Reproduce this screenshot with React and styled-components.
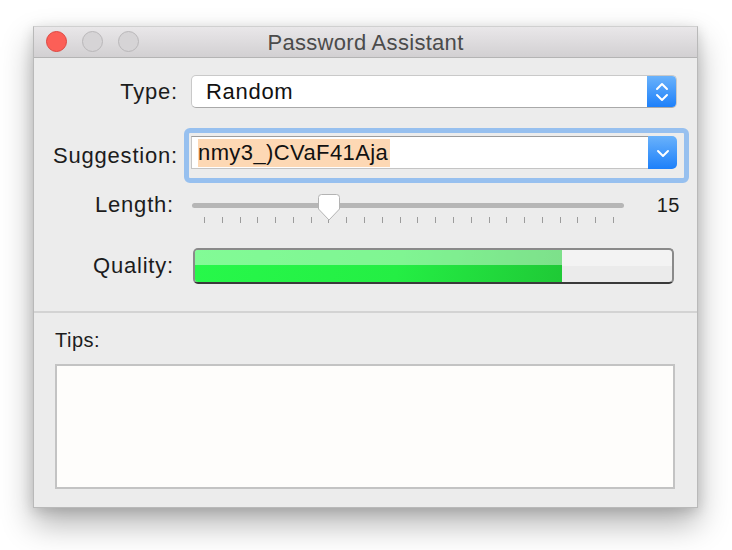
import React from "react";
import styled, { createGlobalStyle } from "styled-components";

const GlobalStyle = createGlobalStyle`
  html, body {
    margin: 0;
    padding: 0;
    background: #ffffff;
    min-height: 550px;
  }
  body {
    font-family: "Liberation Sans", Arial, sans-serif;
    color: #1a1a1a;
  }
`;

const TICKS = 24;
const MIN = 8;
const MAX = 31;
const VALUE = 15;

const App = () => {
  const pos = (VALUE - MIN) / (MAX - MIN);
  return (
    <Page>
      <GlobalStyle />
      <Window>
        <TitleBar>
          <Lights>
            <Light $color="#fc5f57" $edge="#de4640" />
            <Light />
            <Light />
          </Lights>
          <Title>Password Assistant</Title>
        </TitleBar>

        <Form>
          <Row>
            <Label>Type:</Label>
            <Popup>
              <PopupText>Random</PopupText>
              <BlueButton>
                <svg width="14" height="22" viewBox="0 0 14 22">
                  <path d="M2 8 L7 3 L12 8" fill="none" stroke="#fff" strokeWidth="2" strokeLinecap="round" strokeLinejoin="round" />
                  <path d="M2 14 L7 19 L12 14" fill="none" stroke="#fff" strokeWidth="2" strokeLinecap="round" strokeLinejoin="round" />
                </svg>
              </BlueButton>
            </Popup>
          </Row>

          <Row $top={20}>
            <Label>Suggestion:</Label>
            <FocusRing>
              <Combo>
                <ComboField>
                  <Selected>nmy3_)CVaF41Aja</Selected>
                </ComboField>
                <BlueButton $combo>
                  <svg width="14" height="10" viewBox="0 0 14 10">
                    <path d="M2 3 L7 8 L12 3" fill="none" stroke="#fff" strokeWidth="2" strokeLinecap="round" strokeLinejoin="round" />
                  </svg>
                </BlueButton>
              </Combo>
            </FocusRing>
          </Row>

          <SliderRow>
            <Label $shift={4}>Length:</Label>
            <Slider>
              <Track />
              <Thumb style={{ left: `${12 + pos * 410 - 11}px` }}>
                <svg width="22" height="27" viewBox="0 0 22 27">
                  <path
                    d="M3.5 0.5 H18.5 Q21.5 0.5 21.5 3.5 V15 L11 26 L0.5 15 V3.5 Q0.5 0.5 3.5 0.5 Z"
                    fill="#ffffff"
                    stroke="#b3b3b3"
                  />
                </svg>
              </Thumb>
              <Ticks>
                {Array.from({ length: TICKS }).map((_, i) => (
                  <Tick key={i} />
                ))}
              </Ticks>
            </Slider>
            <Value>{VALUE}</Value>
          </SliderRow>

          <Row $top={15}>
            <Label $shift={4}>Quality:</Label>
            <Meter>
              <MeterFill style={{ width: "77%" }} />
            </Meter>
          </Row>
        </Form>

        <Divider />

        <TipsSection>
          <TipsLabel>Tips:</TipsLabel>
          <TipsBox />
        </TipsSection>
      </Window>
    </Page>
  );
};
export default App;

const Page = styled.div`
  height: 550px;
  padding: 26px 0 0 33px;
  box-sizing: border-box;
  background: #ffffff;
`;

const Window = styled.div`
  width: 665px;
  height: 482px;
  box-sizing: border-box;
  background: #ececec;
  border: 1px solid #b9b9b9;
  border-top-color: #d0d0d0;
  display: flex;
  flex-direction: column;
  box-shadow: 0 16px 30px rgba(0, 0, 0, 0.3), 0 3px 12px rgba(0, 0, 0, 0.14);
`;

const TitleBar = styled.div`
  position: relative;
  height: 30px;
  flex-shrink: 0;
  background: linear-gradient(#e9e7e9, #d2d0d2);
  border-bottom: 1px solid #b4b4b4;
  display: flex;
  align-items: center;
  justify-content: center;
`;

const Lights = styled.div`
  position: absolute;
  left: 12px;
  top: 4px;
  display: flex;
  gap: 15px;
`;

const Light = styled.div`
  width: 19px;
  height: 19px;
  border-radius: 50%;
  background: ${(p) => p.$color || "#d6d4d6"};
  border: 1px solid ${(p) => p.$edge || "#b9b7b9"};
`;

const Title = styled.div`
  font-size: 22px;
  letter-spacing: 0.3px;
  color: #4b4b4b;
  margin-top: 2px;
`;

const Form = styled.div`
  padding: 17px 0 0 0;
  display: flex;
  flex-direction: column;
  height: 253px;
  box-sizing: border-box;
`;

const Row = styled.div`
  display: flex;
  align-items: center;
  margin-top: ${(p) => p.$top || 0}px;
`;

const Label = styled.div`
  width: 144px;
  flex-shrink: 0;
  box-sizing: border-box;
  padding-right: ${(p) => p.$shift || 0}px;
  text-align: right;
  font-size: 22px;
  letter-spacing: 0.8px;
  color: #1c1c1c;
  margin-right: 13px;
`;

const Popup = styled.div`
  width: 486px;
  height: 33px;
  box-sizing: border-box;
  background: #ffffff;
  border: 1px solid #c9c9c9;
  border-bottom-color: #a9a9a9;
  border-radius: 5px;
  display: flex;
  align-items: center;
  overflow: hidden;
`;

const PopupText = styled.div`
  flex: 1;
  padding-left: 14px;
  font-size: 22px;
  letter-spacing: 0.7px;
  color: #111;
`;

const BlueButton = styled.div`
  width: 29px;
  align-self: stretch;
  flex-shrink: 0;
  background: linear-gradient(#6ab2fb, #1d80fa);
  display: flex;
  align-items: center;
  justify-content: center;
  border-radius: ${(p) => (p.$combo ? "0 5px 5px 0" : "0")};
`;

const FocusRing = styled.div`
  margin-left: -7px;
  width: 505px;
  height: 55px;
  box-sizing: border-box;
  border: 5px solid #97c0ef;
  border-radius: 6px;
  padding: 3px 7px 9px 2px;
  background: #ececec;
`;

const Combo = styled.div`
  height: 33px;
  display: flex;
`;

const ComboField = styled.div`
  flex: 1;
  background: #ffffff;
  border-top: 1px solid #9c9c9c;
  border-left: 1px solid #c4c4c4;
  border-bottom: 1px solid #c4c4c4;
  display: flex;
  align-items: center;
  padding-left: 6px;
`;

const Selected = styled.span`
  background: #fdd8b4;
  font-size: 22px;
  letter-spacing: 0.4px;
  line-height: 28px;
  padding-right: 2px;
  color: #111;
`;

const SliderRow = styled.div`
  display: flex;
  align-items: flex-start;
  margin-top: 10px;
  line-height: 24px;
`;

const Slider = styled.div`
  position: relative;
  width: 432px;
  height: 40px;
  margin-left: 1px;
  padding-top: 10px;
  box-sizing: border-box;
`;

const Track = styled.div`
  height: 5px;
  border-radius: 3px;
  background: #b6b6b6;
`;

const Thumb = styled.div`
  position: absolute;
  top: 1px;
  width: 22px;
  height: 27px;
  line-height: 0;
`;

const Ticks = styled.div`
  display: flex;
  justify-content: space-between;
  padding: 0 10px 0 12px;
  margin-top: 9px;
`;

const Tick = styled.div`
  width: 1px;
  height: 6px;
  background: #9c9c9c;
`;

const Value = styled.div`
  margin-left: auto;
  margin-right: 17px;
  font-size: 20px;
  letter-spacing: 0.5px;
  color: #1c1c1c;
`;

const Meter = styled.div`
  width: 481px;
  height: 36px;
  margin-left: 2px;
  box-sizing: border-box;
  border: 2px solid #8a8a8a;
  border-bottom-color: #3a3a3a;
  border-radius: 5px;
  overflow: hidden;
  background: linear-gradient(#f3f3f3 0%, #f3f3f3 50%, #ebebeb 50%, #ebebeb 100%);
`;

const MeterFill = styled.div`
  height: 100%;
  background:
    linear-gradient(
      to bottom,
      rgba(255, 255, 255, 0.42) 0%,
      rgba(255, 255, 255, 0.42) 48%,
      rgba(255, 255, 255, 0) 48%
    ),
    linear-gradient(100deg, #27f84a 0%, #24ee44 55%, #1fc936 100%);
`;

const Divider = styled.div`
  height: 2px;
  background: #d3d3d3;
  flex-shrink: 0;
`;

const TipsSection = styled.div`
  flex: 1;
  display: flex;
  flex-direction: column;
  padding: 16px 22px 18px 21px;
`;

const TipsLabel = styled.div`
  font-size: 20px;
  letter-spacing: 0.5px;
  color: #1c1c1c;
  margin-bottom: 12px;
`;

const TipsBox = styled.div`
  flex: 1;
  background: #fefdfb;
  border: 2px solid #c3c3c3;
`;
